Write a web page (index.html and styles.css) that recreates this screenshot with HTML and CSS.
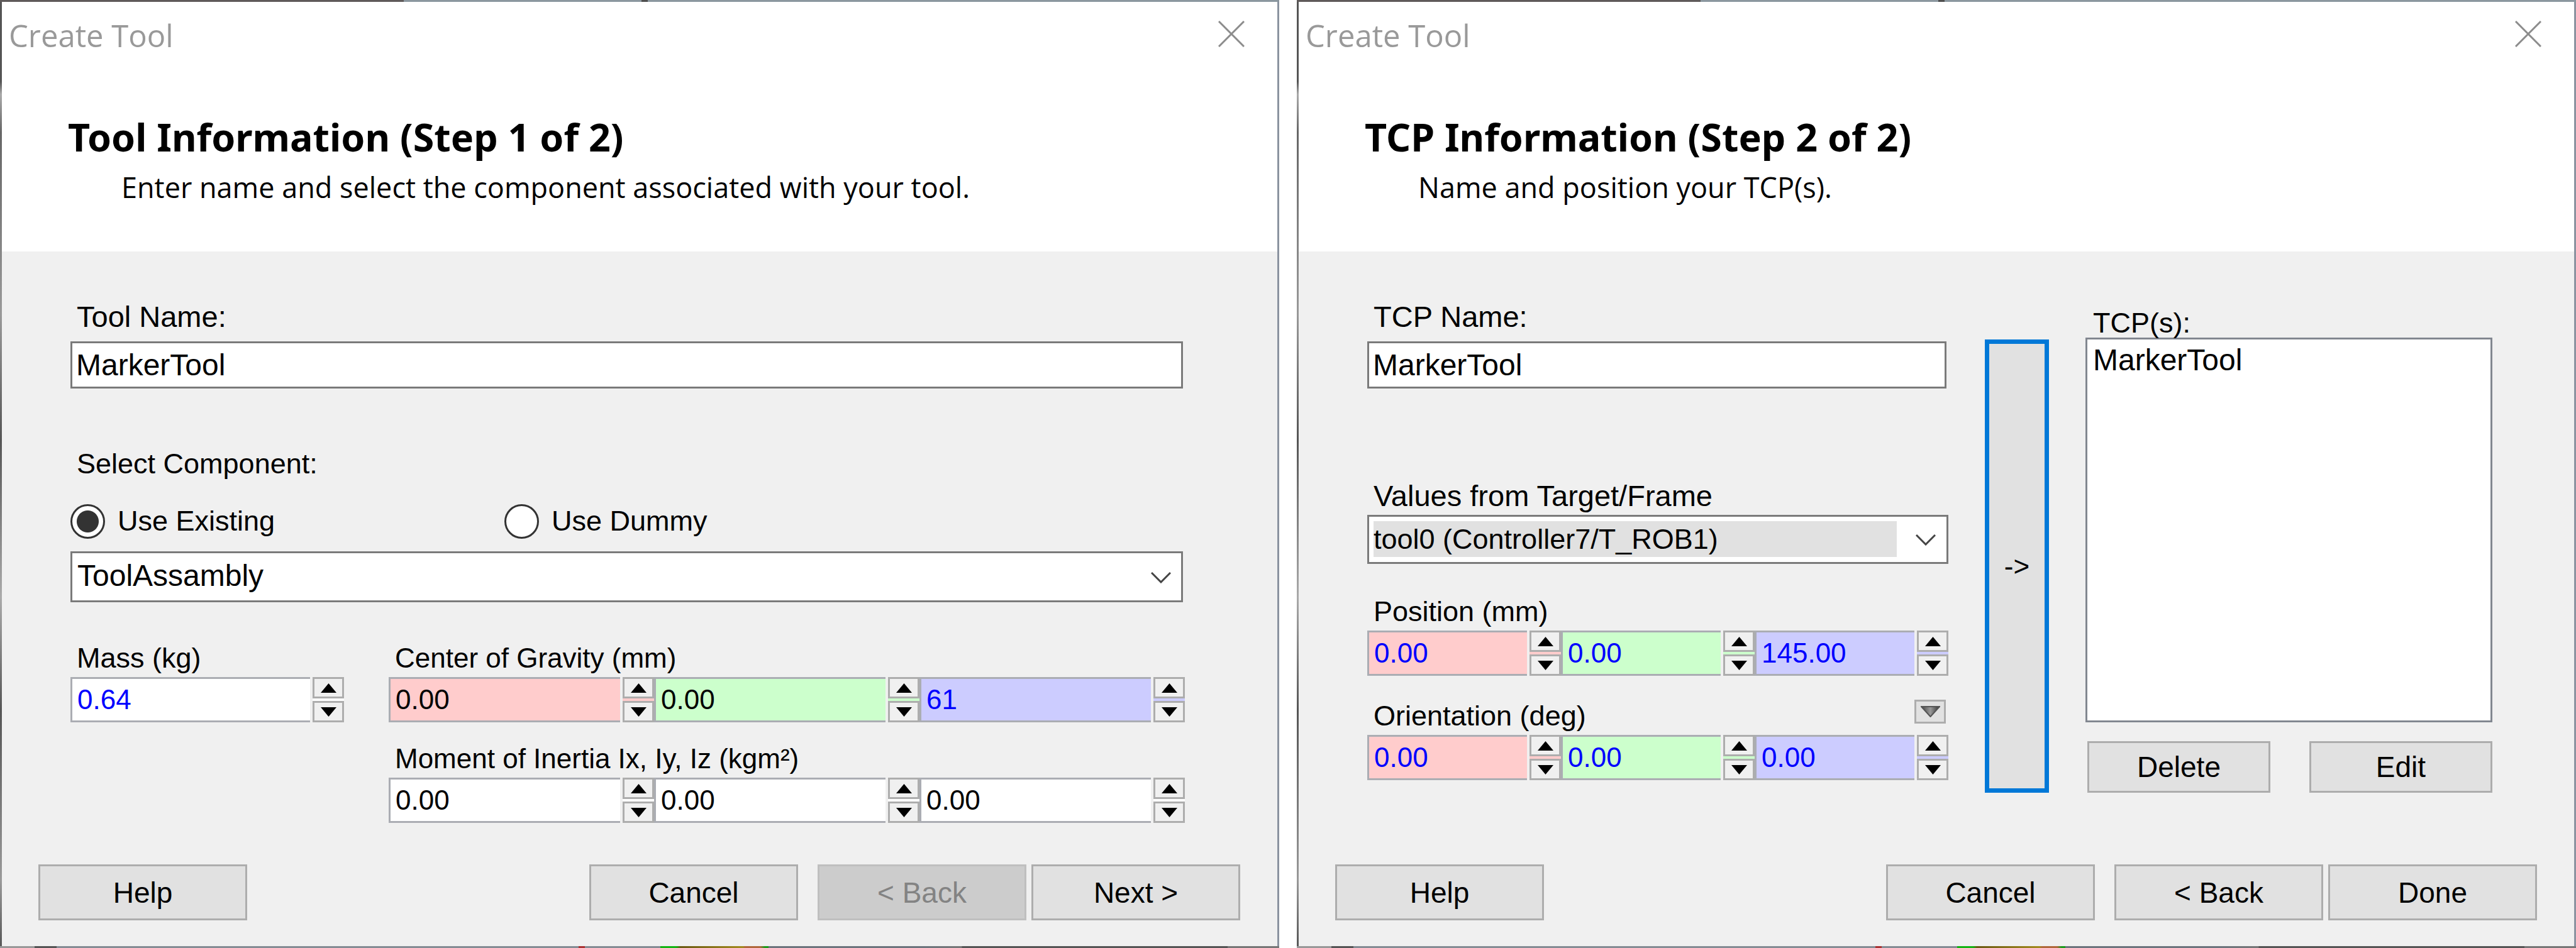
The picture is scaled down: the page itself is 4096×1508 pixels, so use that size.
FILE: index.html
```html
<!DOCTYPE html>
<html lang="en">
<head>
<meta charset="utf-8">
<title>Create Tool</title>
<link rel="stylesheet" href="styles.css">
</head>
<body>
<svg class="defs" aria-hidden="true">
  <defs>
    <symbol id="up" viewBox="0 0 25 15"><path d="M12.500 0 L25 15 H0 Z"/></symbol>
    <symbol id="down" viewBox="0 0 25 15"><path d="M0 0 H25 L12.500 15 Z"/></symbol>
    <symbol id="chevron" viewBox="0 0 32 18"><path d="M1 1 L16 16 L31 1" fill="none" stroke="#444" stroke-width="3"/></symbol>
    <symbol id="close" viewBox="0 0 42 42"><path d="M1 1 L41 41 M41 1 L1 41" fill="none" stroke="#8c8c8c" stroke-width="3"/></symbol>
    <linearGradient id="metal" x1="0" y1="0" x2="1" y2="0"><stop offset="0" stop-color="#444"/><stop offset="0.500" stop-color="#999"/><stop offset="1" stop-color="#333"/></linearGradient>
  </defs>
</svg>
<main class="dialogs">

  <section class="dialog" aria-labelledby="head1">
    <header class="top">
      <div class="titlebar"><span>Create Tool</span><button class="close" type="button" aria-label="Close"><svg><use href="#close"/></svg></button></div>
      <h1 id="head1">Tool Information (Step 1 of 2)</h1>
      <p>Enter name and select the component associated with your tool.</p>
    </header>
    <form class="body">
      <div class="content step1">
        <label class="caption major" for="toolname">Tool Name:</label>
        <input class="box" id="toolname" type="text" value="MarkerTool">
        <div class="caption component" id="component">Select Component:</div>
        <div class="radios" role="radiogroup" aria-labelledby="component">
          <label class="radio"><input type="radio" name="source" checked>Use Existing</label>
          <label class="radio"><input type="radio" name="source">Use Dummy</label>
        </div>
        <div class="combo"><select class="box" aria-labelledby="component"><option>ToolAssambly</option></select><svg><use href="#chevron"/></svg></div>
        <div class="physics">
          <div>
            <label class="caption" for="mass">Mass (kg)</label>
            <div class="spins"><div class="spin edited"><input id="mass" type="text" value="0.64"><span class="arrows"><button type="button" aria-label="Increase"><svg><use href="#up"/></svg></button><button type="button" aria-label="Decrease"><svg><use href="#down"/></svg></button></span></div></div>
          </div>
          <div class="vectors">
            <label class="caption" for="cogx">Center of Gravity (mm)</label>
            <div class="spins">
              <div class="spin red"><input id="cogx" type="text" value="0.00"><span class="arrows"><button type="button" aria-label="Increase"><svg><use href="#up"/></svg></button><button type="button" aria-label="Decrease"><svg><use href="#down"/></svg></button></span></div>
              <div class="spin green"><input aria-label="Center of gravity y" type="text" value="0.00"><span class="arrows"><button type="button" aria-label="Increase"><svg><use href="#up"/></svg></button><button type="button" aria-label="Decrease"><svg><use href="#down"/></svg></button></span></div>
              <div class="spin blue edited"><input aria-label="Center of gravity z" type="text" value="61"><span class="arrows"><button type="button" aria-label="Increase"><svg><use href="#up"/></svg></button><button type="button" aria-label="Decrease"><svg><use href="#down"/></svg></button></span></div>
            </div>
            <label class="caption inertia" for="ix">Moment of Inertia Ix, Iy, Iz (kgm²)</label>
            <div class="spins">
              <div class="spin"><input id="ix" type="text" value="0.00"><span class="arrows"><button type="button" aria-label="Increase"><svg><use href="#up"/></svg></button><button type="button" aria-label="Decrease"><svg><use href="#down"/></svg></button></span></div>
              <div class="spin"><input aria-label="Iy" type="text" value="0.00"><span class="arrows"><button type="button" aria-label="Increase"><svg><use href="#up"/></svg></button><button type="button" aria-label="Decrease"><svg><use href="#down"/></svg></button></span></div>
              <div class="spin"><input aria-label="Iz" type="text" value="0.00"><span class="arrows"><button type="button" aria-label="Increase"><svg><use href="#up"/></svg></button><button type="button" aria-label="Decrease"><svg><use href="#down"/></svg></button></span></div>
            </div>
          </div>
        </div>
      </div>
      <footer class="actions">
        <button class="btn help" type="button">Help</button>
        <button class="btn cancel" type="button">Cancel</button>
        <button class="btn" type="button" disabled>&lt; Back</button>
        <button class="btn" type="button">Next &gt;</button>
      </footer>
    </form>
  </section>

  <section class="dialog" aria-labelledby="head2">
    <header class="top">
      <div class="titlebar"><span>Create Tool</span><button class="close" type="button" aria-label="Close"><svg><use href="#close"/></svg></button></div>
      <h1 id="head2">TCP Information (Step 2 of 2)</h1>
      <p>Name and position your TCP(s).</p>
    </header>
    <form class="body">
      <div class="content step2">
        <div class="values">
          <label class="caption major" for="tcpname">TCP Name:</label>
          <input class="box" id="tcpname" type="text" value="MarkerTool">
          <label class="caption major target" for="frame">Values from Target/Frame</label>
          <div class="combo focused"><select class="box" id="frame"><option>tool0 (Controller7/T_ROB1)</option></select><svg><use href="#chevron"/></svg></div>
          <label class="caption position" for="px">Position (mm)</label>
          <div class="spins">
            <div class="spin red edited"><input id="px" type="text" value="0.00"><span class="arrows"><button type="button" aria-label="Increase"><svg><use href="#up"/></svg></button><button type="button" aria-label="Decrease"><svg><use href="#down"/></svg></button></span></div>
            <div class="spin green edited"><input aria-label="Position y" type="text" value="0.00"><span class="arrows"><button type="button" aria-label="Increase"><svg><use href="#up"/></svg></button><button type="button" aria-label="Decrease"><svg><use href="#down"/></svg></button></span></div>
            <div class="spin blue edited"><input aria-label="Position z" type="text" value="145.00"><span class="arrows"><button type="button" aria-label="Increase"><svg><use href="#up"/></svg></button><button type="button" aria-label="Decrease"><svg><use href="#down"/></svg></button></span></div>
          </div>
          <div class="orientation">
            <label class="caption" for="rx">Orientation (deg)</label>
            <button class="more" type="button" aria-label="Orientation format"><svg viewBox="0 0 31 18"><path d="M1 1 H30 L15.500 17 Z" fill="url(#metal)" stroke="#555" stroke-width="2"/></svg></button>
          </div>
          <div class="spins">
            <div class="spin red edited"><input id="rx" type="text" value="0.00"><span class="arrows"><button type="button" aria-label="Increase"><svg><use href="#up"/></svg></button><button type="button" aria-label="Decrease"><svg><use href="#down"/></svg></button></span></div>
            <div class="spin green edited"><input aria-label="Orientation y" type="text" value="0.00"><span class="arrows"><button type="button" aria-label="Increase"><svg><use href="#up"/></svg></button><button type="button" aria-label="Decrease"><svg><use href="#down"/></svg></button></span></div>
            <div class="spin blue edited"><input aria-label="Orientation z" type="text" value="0.00"><span class="arrows"><button type="button" aria-label="Increase"><svg><use href="#up"/></svg></button><button type="button" aria-label="Decrease"><svg><use href="#down"/></svg></button></span></div>
          </div>
        </div>
        <button class="add" type="button">-&gt;</button>
        <div class="tcps">
          <label class="caption" for="tcplist">TCP(s):</label>
          <select class="list" id="tcplist" size="10"><option>MarkerTool</option></select>
          <div class="edits">
            <button class="btn" type="button">Delete</button>
            <button class="btn" type="button">Edit</button>
          </div>
        </div>
      </div>
      <footer class="actions">
        <button class="btn help" type="button">Help</button>
        <button class="btn cancel" type="button">Cancel</button>
        <button class="btn" type="button">&lt; Back</button>
        <button class="btn" type="button">Done</button>
      </footer>
    </form>
  </section>

</main>
</body>
</html>
```
FILE: styles.css
```css
* { box-sizing: border-box; }

body {
  margin: 0;
  background: #fff;
  color: #000;
  font-family: "Liberation Sans", Arial, sans-serif;
  font-size: 45px;
}

button, input, select {
  margin: 0;
  font-family: inherit;
  font-size: 46px;
  color: inherit;
  border-radius: 0;
  outline: 0;
}

svg { display: block; }
.defs { position: absolute; width: 0; height: 0; }

.dialogs {
  display: grid;
  grid-template-columns: repeat(2, minmax(0, 1fr));
  gap: 28px;
  min-height: 100vh;
}

.dialog {
  display: flex;
  flex-direction: column;
  padding: 3px;
  background:
    linear-gradient(90deg, #5f5a5a 0 642px, #8b979f 642px 1020px, #4f4f4f 1020px 1030px, #8b979f 1030px) top / 100% 3px no-repeat,
    linear-gradient(90deg, #999 0 55px, #555 55px 90px, #858c94 90px 920px, #a33 920px 930px, #858c94 930px 1050px, #14b414 1050px 1075px, #6b5a14 1082px, #a38a1e 1181px, #b0683c 1185px 1209px, #1c9c1c 1216px 1222px, #6d757d 1222px 1470px, #777 1529px, #555 1530px 1952px, #777 1952px) bottom / 100% 3px no-repeat,
    linear-gradient(#555 0 130px, #aaa 150px, #666 210px, #999 500px, #555 700px, #aaa 950px, #555 1130px, #999 1400px, #555) left / 3px 100% no-repeat,
    #8b93a0;
}

.top {
  background: #fff;
  padding-bottom: 71px;
  font-family: "Noto Sans", "Open Sans", sans-serif;
}

.titlebar {
  display: flex;
  justify-content: space-between;
  padding: 20px 52px 0 11px;
  font-family: "Open Sans", "Noto Sans", sans-serif;
  font-size: 49px;
  line-height: 66px;
  color: #999;
}

.close {
  width: 42px;
  height: 42px;
  margin-top: 10px;
  padding: 0;
  border: 0;
  background: none;
}
.close svg { width: 42px; height: 42px; }

.top h1 {
  margin: 93px 0 0 105px;
  font-size: 61px;
  line-height: 72px;
}

.top p {
  margin: 13px 0 0 190px;
  font-family: "Open Sans", "Noto Sans", sans-serif;
  font-size: 45px;
  line-height: 62px;
}

.body {
  flex: 1;
  display: flex;
  flex-direction: column;
  background: #f0f0f0;
}

.content { padding: 78px 147px 0 109px; }

.caption {
  display: block;
  padding-left: 10px;
  line-height: 52px;
  white-space: nowrap;
}
.major { font-size: 47px; }
.vectors .caption { font-size: 44px; }

.box {
  display: block;
  width: calc(100% - 3px);
  height: 75px;
  margin-top: 13px;
  padding: 0 6px;
  border: 3px solid #7a7a7a;
  background: #fff;
  font-size: 48px;
}

.component { margin-top: 94px; }

.radios { display: flex; margin-top: 37px; }
.radio {
  display: flex;
  align-items: center;
  flex: 0 0 690px;
  height: 56px;
  gap: 20px;
}
.radio input {
  appearance: none;
  width: 55px;
  height: 55px;
  border: 3px solid #333;
  border-radius: 50%;
  background: #fff;
}
.radio input:checked { background: radial-gradient(circle, #333 0 17px, #fff 18px); }

.combo { position: relative; }
.combo .box {
  appearance: none;
  height: 81px;
  margin-top: 0;
  padding: 0 60px 5px 8px;
}
.combo svg {
  position: absolute;
  right: 22px;
  top: 33px;
  width: 32px;
  height: 18px;
  pointer-events: none;
}
.step1 .combo { margin-top: 20px; }
.focused .box {
  width: 100%;
  height: 78px;
  padding: 7px 79px 8px 7px;
  background: linear-gradient(#e1e1e1, #e1e1e1) content-box, #fff;
  font-size: 45px;
}
.focused svg { right: 20px; top: 31px; }

.physics {
  display: grid;
  grid-template-columns: 435px minmax(0, 1fr);
  gap: 71px;
  margin-top: 63px;
}
.inertia { margin-top: 32px; }

.spins { display: flex; margin-top: 4px; }
.spin {
  --field: #fff;
  flex: 1 1 0;
  min-width: 0;
  display: flex;
  gap: 4px;
  height: 72px;
}
.spin input {
  flex: 1 1 0;
  min-width: 0;
  width: 0;
  padding: 0 0 0 8px;
  border: 3px solid #abadb3;
  border-right: 0;
  background: var(--field);
  font-size: 44px;
}
.red { --field: #ffcccc; }
.green { --field: #ccffcc; }
.blue { --field: #ccccff; }
.edited { color: #00f; }

.arrows {
  display: flex;
  flex-direction: column;
  gap: 4px;
  width: 50px;
  background: var(--field);
}
.arrows button {
  flex: 1;
  display: flex;
  align-items: center;
  justify-content: center;
  padding: 0;
  border: 3px solid #adadad;
  background: #f0f0f0;
  color: #000;
}
.arrows svg { width: 25px; height: 15px; }

.step2 {
  display: grid;
  grid-template-columns: minmax(0, 924fr) 102px minmax(0, 647fr);
  column-gap: 58px;
  padding-right: 130px;
}
.target { margin-top: 145px; }
.focused { margin-top: 4px; }
.position { margin-top: 50px; }
.orientation {
  display: flex;
  justify-content: space-between;
  margin-top: 38px;
  padding-right: 4px;
}
.more {
  display: flex;
  align-items: center;
  justify-content: center;
  width: 50px;
  height: 38px;
  padding: 0;
  border: 3px solid #adadad;
  background: #e1e1e1;
}
.more svg { width: 31px; height: 18px; }

.add {
  margin-top: 62px;
  padding: 0;
  border: 7px solid #0078d7;
  background: #e1e1e1;
  font-size: 44px;
}

.tcps { padding-top: 13px; }
.tcps .caption { padding-left: 12px; line-height: 46px; }
.list {
  display: block;
  width: 100%;
  height: 612px;
  padding: 5px 0;
  border: 3px solid #828790;
  background: #fff;
  overflow: hidden;
  font-size: 48px;
}
.list option { padding: 0 9px; line-height: 54px; min-height: 0; }

.btn {
  width: 332px;
  height: 89px;
  padding: 0;
  border: 3px solid #adadad;
  background: #e1e1e1;
}
.btn:disabled { border-color: #bfbfbf; background: #ccc; color: #838383; }

.edits {
  display: flex;
  gap: 62px;
  margin-top: 30px;
  padding-left: 3px;
}
.edits .btn { flex: 1; height: 82px; }

.actions {
  display: flex;
  gap: 8px;
  margin-top: auto;
  padding: 40px 59px 41px 58px;
}
.help { margin-right: auto; }
.cancel { margin-right: 23px; }
```
